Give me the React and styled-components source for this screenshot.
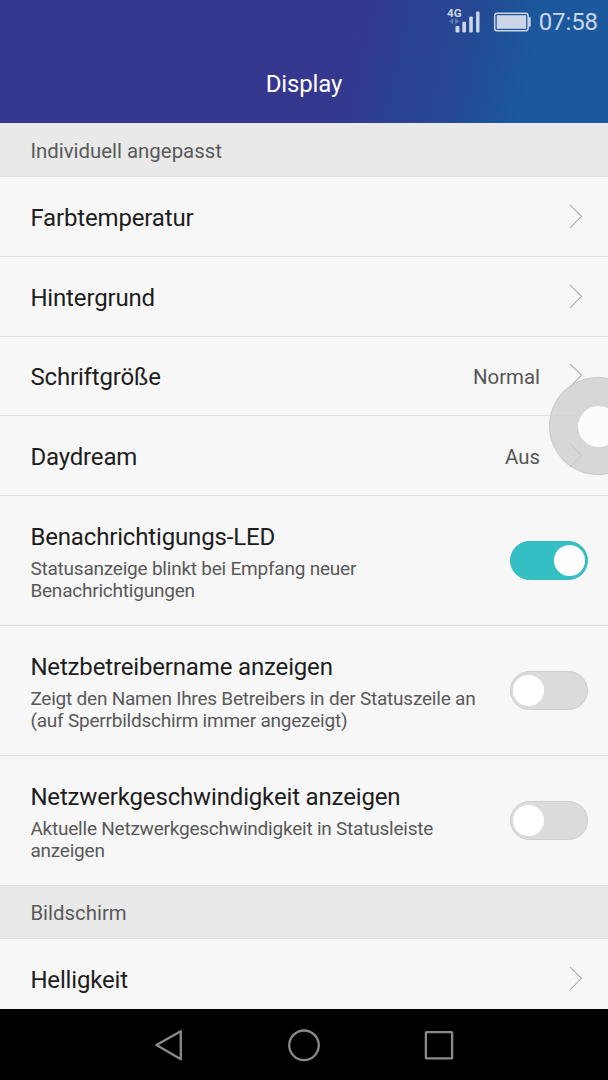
import React from "react";
import styled, { createGlobalStyle } from "styled-components";

const GlobalStyle = createGlobalStyle`
  * { box-sizing: border-box; }
  body { margin: 0; background: #000; font-family: Roboto, "Liberation Sans", sans-serif; }
`;

const Screen = styled.main`
  position: relative;
  display: flex;
  flex-direction: column;
  width: 608px;
  height: 1080px;
  overflow: hidden;
  background: #f7f7f7;
`;

const Header = styled.header`
  flex: none;
  height: 123px;
  background: linear-gradient(103deg, #36378e 0%, #36378e 52%, #313b8f 60%, #2a4292 66%, #264793 74%, #1f5098 80%, #1b589d 86%, #1b589d 100%);
`;

const StatusBar = styled.div`
  display: flex;
  justify-content: flex-end;
  align-items: center;
  height: 43px;
  padding-right: 10px;
  color: #cbd6e7;
`;

const Clock = styled.span`
  margin-left: 8px;
  font-size: 24px;
  line-height: 28px;
  letter-spacing: -0.1px;
`;

const AppTitle = styled.h1`
  margin: 0;
  color: #fff;
  font-size: 24px;
  font-weight: 400;
  line-height: 82px;
  letter-spacing: -0.15px;
  text-align: center;
`;

const Settings = styled.div`
  flex: 1;
  min-height: 0;
  overflow: hidden;
`;

const SectionTitle = styled.h2`
  display: flex;
  align-items: center;
  height: ${({ $height }) => $height}px;
  margin: 0;
  padding: 2px 30px 0 30.4px;
  background: #e9e9e9;
  border-bottom: 1px solid #dedede;
  color: #595959;
  font-size: 20.4px;
  font-weight: 400;
`;

const Row = styled.div`
  display: flex;
  align-items: center;
  height: ${({ $height = 80 }) => $height}px;
  padding: 0 20px 0 30.4px;
  border-bottom: 1px solid #dfdfdf;
`;

const Texts = styled.div`
  flex: 1;
`;

const Label = styled.div`
  color: #1d1d1d;
  font-size: 24px;
  line-height: 32px;
  letter-spacing: -0.16px;
  padding-top: ${({ $single }) => ($single ? 2 : 1)}px;
`;

const Description = styled.div`
  max-width: 460px;
  margin-top: 5px;
  color: #595959;
  font-size: 19px;
  line-height: 22px;
  letter-spacing: -0.22px;
  white-space: pre-line;
`;

const Value = styled.span`
  margin-right: 29px;
  padding-top: 2px;
  color: #555;
  font-size: 20.4px;
`;

const ChevronIcon = styled.svg`
  width: 14px;
  height: 26px;
  margin: 0 5px 0 0;
  fill: none;
  stroke: #aaa;
  stroke-width: 1.1;
`;

const Toggle = styled.div`
  display: flex;
  align-items: center;
  justify-content: ${({ $on }) => ($on ? "flex-end" : "flex-start")};
  width: 78px;
  height: 39px;
  padding: 0 2px;
  border: 1px solid ${({ $on }) => ($on ? "#39b7bd" : "#cdcdcd")};
  border-radius: 20px;
  background: ${({ $on }) => ($on ? "#34bfc5" : "#dbdbdb")};
`;

const Knob = styled.span`
  width: 31px;
  height: 31px;
  border-radius: 50%;
  background: #fff;
`;

const FloatingButton = styled.div`
  position: absolute;
  top: 377px;
  left: 549px;
  display: grid;
  place-items: center;
  width: 98px;
  height: 98px;
  border: 1px solid rgba(196, 196, 196, 0.8);
  border-radius: 50%;
  background: rgba(208, 208, 208, 0.82);
`;

const FloatingCore = styled.span`
  width: 41px;
  height: 41px;
  border-radius: 50%;
  background: #fcfcfc;
`;

const NavBar = styled.nav`
  flex: none;
  display: flex;
  justify-content: center;
  align-items: center;
  gap: 99px;
  height: 71px;
  background: #000;
`;

const NavIcon = styled.svg`
  width: 36px;
  height: 36px;
  fill: none;
  stroke: #8a8a8a;
  stroke-width: 2.3;
  stroke-linejoin: round;
`;

const SignalIcon = styled.svg`
  width: 38px;
  height: 36px;
  margin-right: 7px;
  fill: currentColor;
  overflow: visible;
`;

const Chevron = () => (
  <ChevronIcon viewBox="0 0 14 26">
    <path d="M1 .8 12.5 12.3 1 23.8" />
  </ChevronIcon>
);

const Signal = () => (
  <SignalIcon viewBox="-1 -4 38 36">
    <text x="0" y="8.5" fontSize="11.5" fontWeight="700" textLength="14.5" lengthAdjust="spacingAndGlyphs">4G</text>
    <path d="M6.2 10v6.4L2.2 13.2zM8 10v6.4l4-3.2z" opacity=".35" />
    <rect x="8.5" y="18" width="4" height="6.5" rx="1" />
    <rect x="15.3" y="13.7" width="3.7" height="10.8" rx="1" />
    <rect x="22.2" y="8.5" width="3.6" height="16" rx="1" />
    <rect x="29.1" y="3.5" width="3.4" height="21" rx="1" />
  </SignalIcon>
);

const Battery = () => (
  <svg width="40" height="22" viewBox="0 0 40 22" fill="none">
    <rect x="3.7" y="2.2" width="33.4" height="17.6" rx="2.6" stroke="currentColor" strokeWidth="1.5" />
    <rect x="5.7" y="4.2" width="29.4" height="13.6" fill="currentColor" />
    <path d="M37.3 6h.9q1.5 0 1.5 1.5v7q0 1.5-1.5 1.5h-.9z" fill="currentColor" />
  </svg>
);

const LinkRow = ({ label, value, height }) => (
  <Row $height={height}>
    <Texts><Label $single>{label}</Label></Texts>
    {value && <Value>{value}</Value>}
    <Chevron />
  </Row>
);

const ToggleRow = ({ label, description, on }) => (
  <Row $height={130}>
    <Texts>
      <Label>{label}</Label>
      <Description>{description}</Description>
    </Texts>
    <Toggle $on={on} role="switch" aria-checked={!!on}><Knob /></Toggle>
  </Row>
);

export default function App() {
  return (
    <>
      <GlobalStyle />
      <Screen>
        <Header>
          <StatusBar>
            <Signal />
            <Battery />
            <Clock>07:58</Clock>
          </StatusBar>
          <AppTitle>Display</AppTitle>
        </Header>
        <Settings>
          <SectionTitle $height={54}>Individuell angepasst</SectionTitle>
          <LinkRow label="Farbtemperatur" />
          <LinkRow label="Hintergrund" />
          <LinkRow label="Schriftgröße" value="Normal" height={79} />
          <LinkRow label="Daydream" value="Aus" />
          <ToggleRow on label="Benachrichtigungs-LED" description={"Statusanzeige blinkt bei Empfang neuer\nBenachrichtigungen"} />
          <ToggleRow label="Netzbetreibername anzeigen" description={"Zeigt den Namen Ihres Betreibers in der Statuszeile an\n(auf Sperrbildschirm immer angezeigt)"} />
          <ToggleRow label="Netzwerkgeschwindigkeit anzeigen" description={"Aktuelle Netzwerkgeschwindigkeit in Statusleiste\nanzeigen"} />
          <SectionTitle $height={53}>Bildschirm</SectionTitle>
          <LinkRow label="Helligkeit" height={81} />
        </Settings>
        <NavBar>
          <NavIcon viewBox="0 0 36 36"><path d="M5.5 18 29.8 4.3v28z" /></NavIcon>
          <NavIcon viewBox="0 0 36 36"><circle cx="18" cy="18.3" r="14.8" /></NavIcon>
          <NavIcon viewBox="0 0 36 36"><rect x="4.9" y="5.2" width="26.2" height="26.2" rx="0.5" /></NavIcon>
        </NavBar>
        <FloatingButton><FloatingCore /></FloatingButton>
      </Screen>
    </>
  );
}
